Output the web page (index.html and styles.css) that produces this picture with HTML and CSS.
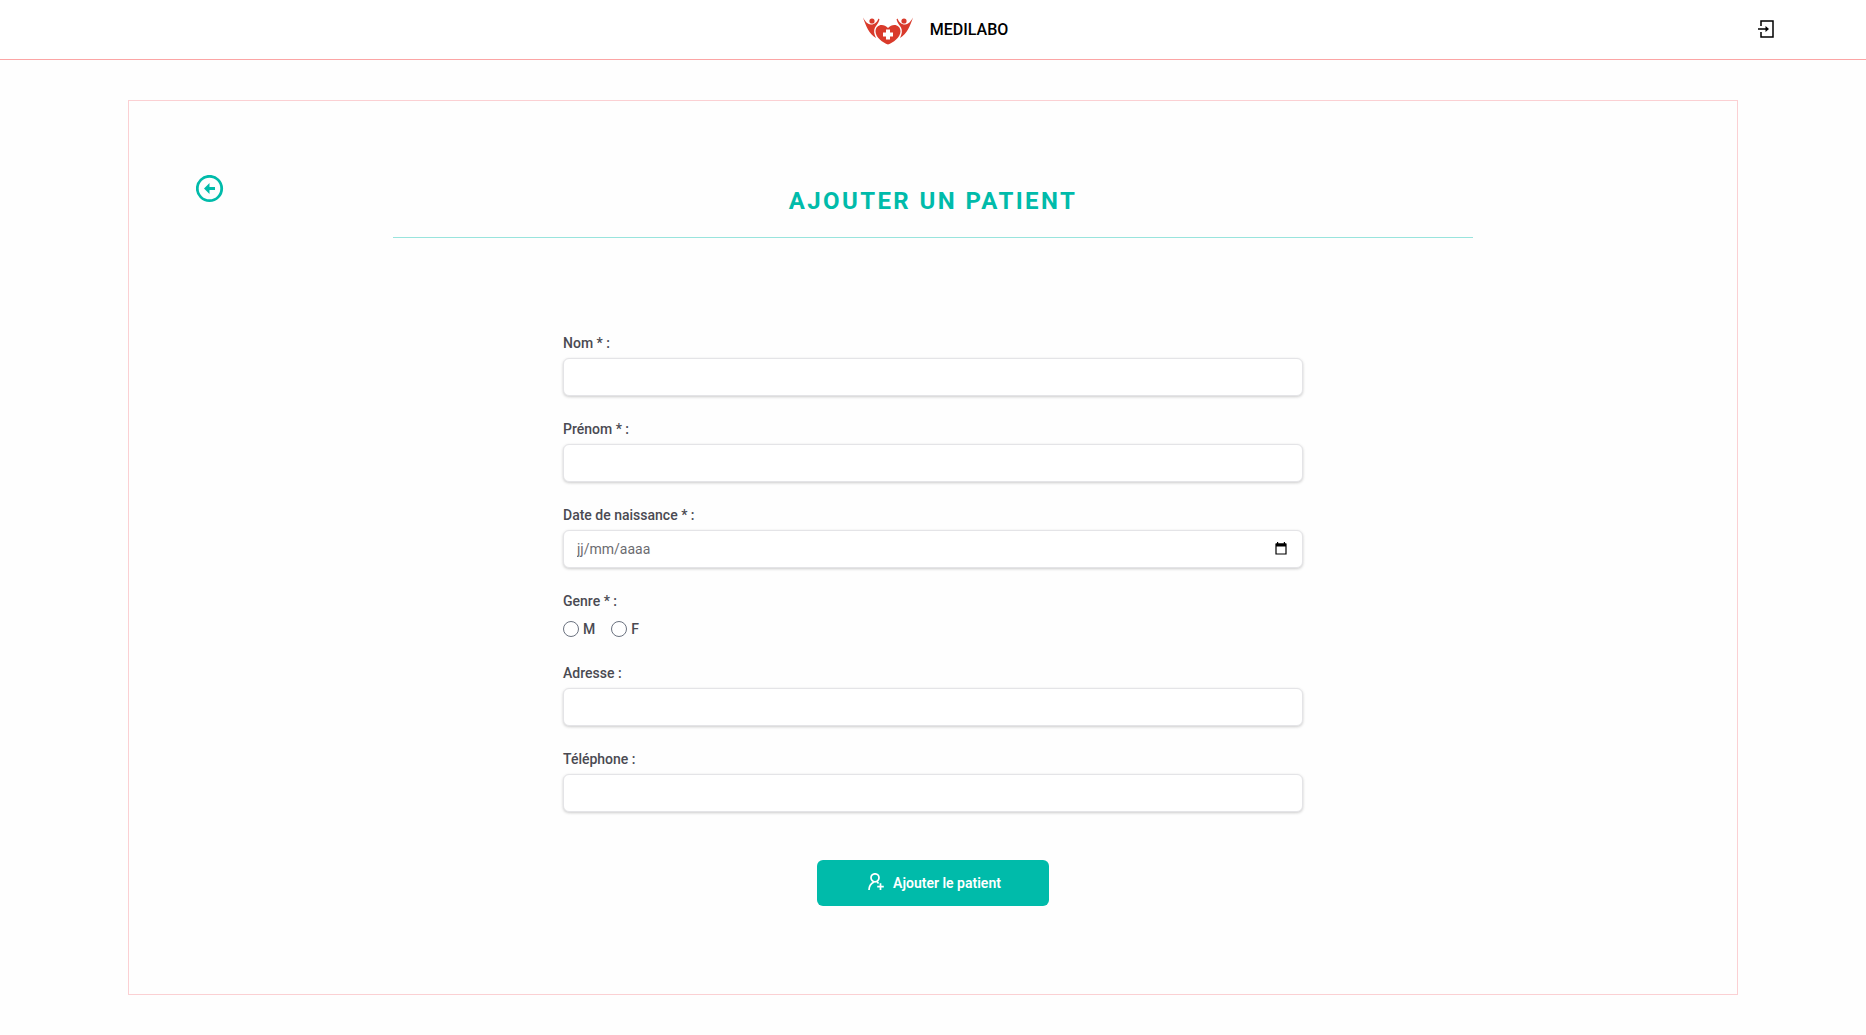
FILE: index.html
```html
<!DOCTYPE html>
<html lang="fr">
  <head>
    <meta charset="UTF-8" />
    <meta name="viewport" content="width=device-width, initial-scale=1.0" />
    <title>Medilabo</title>
    <link rel="stylesheet" href="styles.css">
  </head>
  <body>
    <header class="header">
      <a class="brand" href="#">
        <svg class="logo" viewBox="-5 0 56 28" aria-hidden="true">
          <g fill="#d93a2b">
            <path d="M25 27.500 C20 26 12.500 20 12.500 14.500 C12.500 7.500 20.500 6 25 11 C29.500 6 37.500 7.500 37.500 14.500 C37.500 20 30 26 25 27.500 Z" />
            <circle cx="9" cy="4" r="2.600" />
            <circle cx="41" cy="4" r="2.600" />
            <path d="M0 0.500 C2 4 4 7 8 7.500 C12 7.500 14 5 15.500 1.500 L16.500 2.500 C15.500 6 13.500 8 12 10.500 C10.500 13.500 11 17 13 21 C6 17 3 9 0 0.500 Z" />
            <path d="M50 0.500 C48 4 46 7 42 7.500 C38 7.500 36 5 34.500 1.500 L33.500 2.500 C34.500 6 36.500 8 38 10.500 C39.500 13.500 39 17 37 21 C44 17 47 9 50 0.500 Z" />
          </g>
          <path d="M23 12.500 H27 V15.500 H30 V19.500 H27 V22.500 H23 V19.500 H20 V15.500 H23 Z" fill="#fff" />
        </svg>
        <span>MEDILABO</span>
      </a>
      <button class="logout" type="button" aria-label="Se déconnecter">
        <svg viewBox="0 0 16 18" fill="none" stroke="#000" aria-hidden="true">
          <path d="M3 6 V1 H15 V17 H3 V12" stroke-width="1.500" />
          <path d="M0 9 H9" stroke-width="1.500" />
          <path d="M7.500 6 L11 9 L7.500 12 Z" fill="#000" stroke="none" />
        </svg>
      </button>
    </header>

    <main class="card">
      <a class="back" href="#" aria-label="Retour">
        <svg viewBox="0 0 28 28" aria-hidden="true">
          <circle cx="13.500" cy="13.500" r="12.200" fill="none" stroke="#00bbaa" stroke-width="2.800" />
          <path d="M8 13.500 L13.500 8 V12.100 H19 V14.900 H13.500 V19 Z" fill="#00bbaa" />
        </svg>
      </a>
      <h1 class="title">AJOUTER UN PATIENT</h1>

      <form class="form">
        <div class="field">
          <label for="nom">Nom * :</label>
          <input type="text" id="nom" name="nom">
        </div>
        <div class="field">
          <label for="prenom">Prénom * :</label>
          <input type="text" id="prenom" name="prenom">
        </div>
        <div class="field">
          <label for="naissance">Date de naissance * :</label>
          <div class="date">
            <input type="text" id="naissance" name="naissance" placeholder="jj/mm/aaaa">
            <button class="date-picker" type="button" aria-label="Ouvrir le calendrier">
              <svg viewBox="0 0 12 13" aria-hidden="true">
                <path d="M1 2 H11 V12 H1 Z" fill="none" stroke="#000" stroke-width="1.200" />
                <path d="M1 1.500 H11 V4.500 H1 Z M2 0 H3.200 V2 H2 Z M8.800 0 H10 V2 H8.800 Z" fill="#000" />
              </svg>
            </button>
          </div>
        </div>
        <fieldset class="field">
          <legend>Genre * :</legend>
          <div class="radios">
            <label><input type="radio" name="genre" value="M">M</label>
            <label><input type="radio" name="genre" value="F">F</label>
          </div>
        </fieldset>
        <div class="field">
          <label for="adresse">Adresse :</label>
          <input type="text" id="adresse" name="adresse">
        </div>
        <div class="field">
          <label for="telephone">Téléphone :</label>
          <input type="tel" id="telephone" name="telephone">
        </div>
        <button class="submit" type="submit">
          <svg viewBox="0 0 20 20" fill="none" stroke="#fff" stroke-width="1.700" aria-hidden="true">
            <circle cx="10" cy="4.800" r="4" />
            <path d="M4 17 C4 13 6 10.500 9 9 M12 8.500 L13.500 10.500" />
            <path d="M15.500 10.300 V17 M12.200 13.600 H18.800" />
          </svg>
          Ajouter le patient
        </button>
      </form>
    </main>
  </body>
</html>
```

FILE: styles.css
```css
* {
  box-sizing: border-box;
  margin: 0;
  padding: 0;
}

body {
  font-family: Roboto, sans-serif;
  font-size: 14px;
  line-height: 18px;
  color: #4a4a52;
  background: #fefefe;
}

button {
  font-family: inherit;
  border: none;
  background: none;
  cursor: pointer;
}

svg {
  display: block;
}

.header {
  display: grid;
  grid-template-columns: 1fr auto 1fr;
  align-items: center;
  height: 60px;
  padding: 0 92px;
  background: #fff;
  border-bottom: 1px solid #fca5a5;
}

.brand {
  grid-column: 2;
  display: flex;
  align-items: center;
  gap: 16px;
  font-size: 16px;
  font-weight: 500;
  color: #000;
  text-decoration: none;
}

.logo {
  width: 56px;
  height: 28px;
  margin-top: 3px;
}

.logout {
  justify-self: end;
  padding-bottom: 2px;
}

.logout svg {
  width: 16px;
  height: 18px;
}

.card {
  position: relative;
  margin: 40px 128px;
  padding: 80px 64px 88px;
  border: 1px solid #fbd0d3;
}

.back {
  position: absolute;
  top: 74px;
  left: 67px;
}

.back svg {
  width: 28px;
  height: 28px;
}

.title {
  max-width: 1080px;
  margin: 0 auto 96px;
  padding: 4px 0 20px;
  border-bottom: 1px solid #99e4dd;
  font-size: 24px;
  font-weight: 700;
  line-height: 32px;
  letter-spacing: 0.1em;
  text-align: center;
  color: #00bbaa;
}

.form {
  display: flex;
  flex-direction: column;
  gap: 24px;
  max-width: 740px;
  margin: 0 auto;
}

.field {
  display: flex;
  flex-direction: column;
  gap: 6px;
  border: none;
  font-weight: 500;
}

.field input[type="text"],
.field input[type="tel"] {
  width: 100%;
  height: 38px;
  padding: 0 13px;
  border: 1px solid #e4e4e7;
  border-radius: 6px;
  background: #fff;
  box-shadow: 0 1px 3px rgba(0, 0, 0, 0.2);
  font-family: inherit;
  font-size: 14px;
  color: #4a4a52;
}

.field input::placeholder {
  color: #6b6b70;
}

.date {
  position: relative;
}

.date-picker {
  position: absolute;
  top: 12px;
  right: 16px;
}

.date-picker svg {
  width: 12px;
  height: 13px;
}

.radios {
  display: flex;
  gap: 16px;
  padding: 10px 0 2px;
}

.radios label {
  display: flex;
  align-items: center;
  gap: 4px;
}

.radios input {
  appearance: none;
  width: 16px;
  height: 16px;
  border: 1px solid #6b7280;
  border-radius: 50%;
  background: #fff;
}

.radios input:checked {
  border: 5px solid #00bbaa;
}

.submit {
  display: flex;
  align-items: center;
  justify-content: center;
  gap: 8px;
  width: 232px;
  height: 46px;
  margin: 24px auto 0;
  border-radius: 6px;
  background: #00bbaa;
  color: #fff;
  font-size: 14px;
  font-weight: 600;
}

.submit svg {
  width: 20px;
  height: 20px;
}
```
